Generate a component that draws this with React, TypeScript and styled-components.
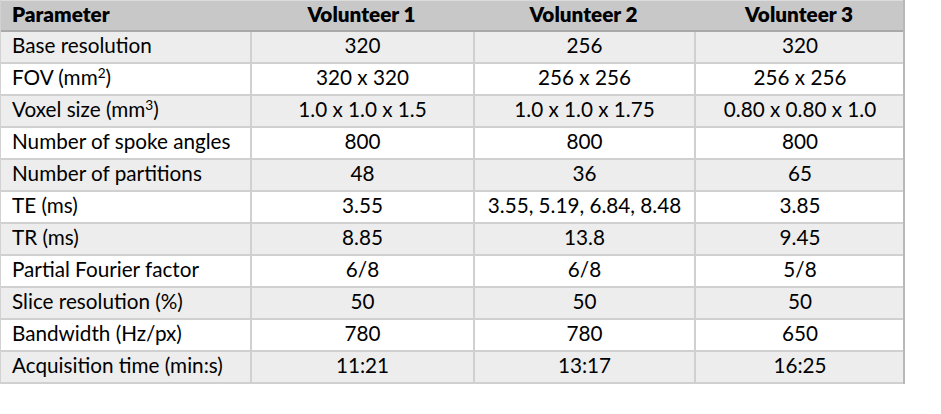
import React from "react";
import styled, { createGlobalStyle } from "styled-components";

const Global = createGlobalStyle`
  html, body { margin: 0; padding: 0; background: #ffffff; }
  body { font-family: Lato, "Open Sans", sans-serif; color: #000; }
`;

const Table = styled.div`
  width: 905px;
  display: flex;
  flex-direction: column;
  border-left: 1px solid #d2d2d2;
  border-right: 2px solid #b8b8b8;
  box-sizing: border-box;
`;

const Row = styled.div<{ $variant: "head" | "odd" | "even" }>`
  display: grid;
  grid-template-columns: 249px 223px 221px 210px;
  height: 32px;
  box-sizing: border-box;
  border-bottom: 2px solid ${(p) => (p.$variant === "head" ? "#a9a9a9" : "#d0d0d0")};
  background: ${(p) =>
    p.$variant === "head" ? "#c8c8c8" : p.$variant === "odd" ? "#ededed" : "#ffffff"};
  ${(p) => (p.$variant === "head" ? "border-top: 1px solid #dcdcdc;" : "")}
`;

const Cell = styled.div<{ $first?: boolean; $bold?: boolean }>`
  display: flex;
  align-items: center;
  justify-content: ${(p) => (p.$first ? "flex-start" : "center")};
  padding-left: ${(p) => (p.$first ? "11px" : "0")};
  padding-bottom: 3px;
  font-size: 20.7px;
  font-weight: ${(p) => (p.$bold ? 700 : 400)};
  letter-spacing: 0;
  white-space: nowrap;
  box-sizing: border-box;
  border-left: ${(p) => (p.$first ? "none" : "2px solid #d0d0d0")};
`;

const HeadCell = styled(Cell)`
  border-left: none;
  font-weight: 800;
`;

const Label = styled.span`
  line-height: 1.2;
`;

const Sup = styled.sup`
  font-size: 0.66em;
  vertical-align: 0.5em;
  line-height: 0;
`;

const header = ["Parameter", "Volunteer 1", "Volunteer 2", "Volunteer 3"];

const rows: [React.ReactNode, string, string, string][] = [
  ["Base resolution", "320", "256", "320"],
  [<>FOV (mm<Sup>2</Sup>)</>, "320 x 320", "256 x 256", "256 x 256"],
  [<>Voxel size (mm<Sup>3</Sup>)</>, "1.0 x 1.0 x 1.5", "1.0 x 1.0 x 1.75", "0.80 x 0.80 x 1.0"],
  ["Number of spoke angles", "800", "800", "800"],
  ["Number of partitions", "48", "36", "65"],
  ["TE (ms)", "3.55", "3.55, 5.19, 6.84, 8.48", "3.85"],
  ["TR (ms)", "8.85", "13.8", "9.45"],
  ["Partial Fourier factor", "6/8", "6/8", "5/8"],
  ["Slice resolution (%)", "50", "50", "50"],
  ["Bandwidth (Hz/px)", "780", "780", "650"],
  ["Acquisition time (min:s)", "11:21", "13:17", "16:25"],
];

export default function App() {
  return (
    <>
      <Global />
      <Table>
        <Row $variant="head">
          {header.map((h, i) => (
            <HeadCell key={i} $first={i === 0} $bold>
              <Label>{h}</Label>
            </HeadCell>
          ))}
        </Row>
        {rows.map((r, ri) => (
          <Row key={ri} $variant={ri % 2 === 0 ? "odd" : "even"}>
            {r.map((c, ci) => (
              <Cell key={ci} $first={ci === 0}>
                <Label>{c}</Label>
              </Cell>
            ))}
          </Row>
        ))}
      </Table>
    </>
  );
}
